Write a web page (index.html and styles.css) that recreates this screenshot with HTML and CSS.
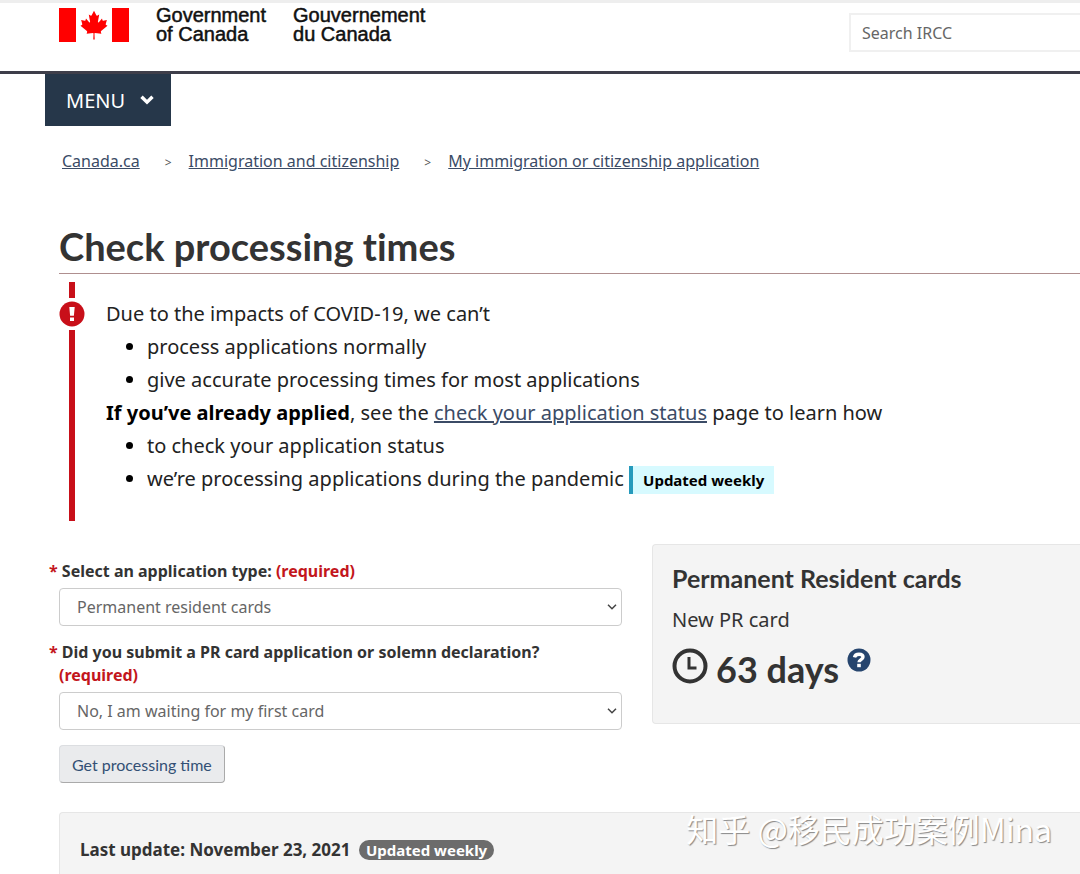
FILE: index.html
```html
<!DOCTYPE html>
<html lang="en">
<head>
  <meta charset="UTF-8" />
  <meta name="viewport" content="width=device-width, initial-scale=1.0" />
  <title>Check processing times</title>
  <link rel="stylesheet" href="styles.css">
</head>
<body>
  <header class="topbar">
    <a href="#" class="brand">
      <svg class="flag" viewBox="0 0 70 34" aria-hidden="true">
        <path fill="#f00" d="M0 0h17v34H0zM53 0h17v34H53z"/>
        <path fill="#f00" transform="translate(3.500 0) scale(.9 .93)" d="M35 3l-2.6 4.8c-.3.5-.8.5-1.3.2l-1.9-1 1.4 7.4c.3 1.3-.7 1.3-1.2.7l-3.3-3.7-.5 1.9c-.1.2-.3.5-.8.4l-4.1-.9 1.1 4c.2.9.4 1.2-.3 1.5l-1.5.7 7.1 5.8c.3.2.4.6.3 1l-.6 2 7.1-.8c.3 0 .6.2.6.5L34.200 34h1.600L35.500 27.500c0-.3.3-.5.6-.5l7.100.8-.6-2c-.1-.4 0-.8.3-1l7.100-5.800-1.500-.7c-.7-.3-.5-.6-.3-1.500l1.100-4-4.100.9c-.5.1-.7-.2-.8-.4l-.5-1.900-3.300 3.700c-.5.600-1.500.600-1.200-.7l1.400-7.400-1.900 1c-.5.300-1 .300-1.300-.2z"/>
      </svg>
      <span class="brand-name">Government<br>of Canada</span>
      <span class="brand-name brand-fr" lang="fr">Gouvernement<br>du Canada</span>
    </a>
    <form class="search">
      <input type="search" class="search-input" placeholder="Search IRCC" aria-label="Search IRCC" />
    </form>
  </header>

  <nav class="menu">
    <button type="button" class="menu-button">MENU
      <svg class="menu-arrow" viewBox="0 0 14 10" aria-hidden="true">
        <path fill="none" stroke="#fff" stroke-width="3.4" d="M1.500 1.700L7 7.200l5.500-5.500"/>
      </svg>
    </button>
  </nav>

  <ol class="breadcrumb">
    <li><a href="#">Canada.ca</a></li>
    <li><a href="#">Immigration and citizenship</a></li>
    <li><a href="#">My immigration or citizenship application</a></li>
  </ol>

  <main class="container">
    <h1>Check processing times</h1>

    <!-- COVID-19 alert -->
    <section class="alert">
      <div class="alert-line">
        <svg class="alert-icon" viewBox="0 0 26 26" aria-hidden="true">
          <circle cx="13" cy="13" r="12.500" fill="#c80f19"/>
          <path fill="#fff" d="M10.300 6h5.400l-.8 8.800h-3.800zM11 16.500h4v3.500h-4z"/>
        </svg>
      </div>
      <div class="alert-text">
        <p>Due to the impacts of COVID-19, we can’t</p>
        <ul>
          <li>process applications normally</li>
          <li>give accurate processing times for most applications</li>
        </ul>
        <p><strong>If you’ve already applied</strong>, see the <a href="#">check your application status</a> page to learn how</p>
        <ul>
          <li>to check your application status</li>
          <li>we’re processing applications during the pandemic <span class="label-info">Updated weekly</span></li>
        </ul>
      </div>
    </section>

    <div class="columns">
      <form class="times-form">
        <label for="appType"><span class="required">*</span> Select an application type: <span class="required">(required)</span></label>
        <div class="select-wrap">
          <select id="appType">
            <option>Permanent resident cards</option>
          </select>
          <svg class="select-arrow" viewBox="0 0 10 6" aria-hidden="true"><path fill="none" stroke="#444" stroke-width="1.500" d="M1 .8l4 4 4-4"/></svg>
        </div>

        <label for="firstCard"><span class="required">*</span> Did you submit a PR card application or solemn declaration? <span class="required">(required)</span></label>
        <div class="select-wrap">
          <select id="firstCard">
            <option>No, I am waiting for my first card</option>
          </select>
          <svg class="select-arrow" viewBox="0 0 10 6" aria-hidden="true"><path fill="none" stroke="#444" stroke-width="1.500" d="M1 .8l4 4 4-4"/></svg>
        </div>

        <button type="button" class="submit-button">Get processing time</button>
      </form>

      <!-- Result -->
      <section class="well result">
        <h2>Permanent Resident cards</h2>
        <p>New PR card</p>
        <div class="result-time">
          <svg class="clock" viewBox="0 0 36 36" aria-hidden="true">
            <circle cx="18" cy="18" r="15.500" fill="none" stroke="#333" stroke-width="4"/>
            <path fill="none" stroke="#333" stroke-width="3" d="M17 9v11h7.500"/>
          </svg>
          <span class="days">63 days</span>
          <button type="button" class="help-button" aria-label="Help">
            <svg viewBox="0 0 24 24" aria-hidden="true">
              <circle cx="12" cy="12" r="11.500" fill="#26456e"/>
              <path fill="none" stroke="#fff" stroke-width="3.400" d="M7.500 9.300C8 6.900 9.600 6.200 12 6.200c2.600 0 4 1.100 4 2.900 0 2.600-4 2.400-4 5.200"/>
              <path fill="#fff" d="M10.200 15.800h3.600v3.400h-3.600z"/>
            </svg>
          </button>
        </div>
      </section>
    </div>

    <section class="well update">
      <strong>Last update: November 23, 2021</strong>
      <span class="badge">Updated weekly</span>
    </section>
  </main>

  <div class="watermark" lang="zh">知乎 @移民成功案例Mina</div>
</body>
</html>
```
FILE: styles.css
```css
* {
  box-sizing: border-box;
}

html {
  height: 100%;
  overflow: hidden;
}

body {
  margin: 0;
  height: 100%;
  overflow: hidden;
  font-family: "Noto Sans", sans-serif;
  font-size: 16px;
  line-height: 23px;
  color: #333;
  background: #fff;
  font-variant-ligatures: none;
}

h1,
h2,
p,
ul,
ol {
  margin: 0;
  padding: 0;
}

a {
  color: #3b4b66;
}

/* Header */
.topbar {
  display: flex;
  justify-content: space-between;
  align-items: flex-start;
  height: 74px;
  padding-left: 59px;
  border-top: 3px solid #eee;
  border-bottom: 3px solid #3e3e4a;
}

.brand {
  display: flex;
  align-items: center;
  padding-top: 3px;
  color: #111;
  text-decoration: none;
}

.flag {
  width: 70px;
  height: 34px;
  margin-right: 27px;
}

.brand-name {
  font-family: "Liberation Sans", Arial, sans-serif;
  font-size: 20px;
  line-height: 19px;
  -webkit-text-stroke: 0.5px #111;
}

.brand-fr {
  margin-left: 27px;
}

.search {
  width: 231px;
  padding-top: 10px;
}

.search-input {
  display: block;
  width: 100%;
  height: 39px;
  padding: 0 11px;
  border: 2px solid #f0f0f0;
  border-right: none;
  border-radius: 0;
  outline: none;
  background: #fff;
  font-family: inherit;
  font-size: 16px;
  appearance: none;
}

.search-input::placeholder {
  color: #666;
}

.menu {
  padding-left: 45px;
}

.menu-button {
  display: flex;
  align-items: center;
  gap: 15px;
  height: 52px;
  padding: 0 17px 0 21px;
  border: none;
  background: #26374a;
  color: #fff;
  font-family: inherit;
  font-size: 20px;
}

.menu-arrow {
  width: 14px;
  height: 10px;
}

.breadcrumb {
  display: flex;
  padding: 24px 0 0 62px;
  list-style: none;
}

.breadcrumb li + li::before {
  content: ">";
  margin: 0 17px 0 25px;
  font-size: 12px;
  color: #555;
}

/* Content */
.container {
  padding-left: 59px;
}

h1 {
  padding: 47px 0 2px;
  border-bottom: 1px solid #af8f8f;
  font-family: Lato, sans-serif;
  font-size: 38px;
  line-height: 50px;
}

.alert {
  display: flex;
  gap: 21px;
  margin-top: 8px;
}

.alert-line {
  width: 26px;
  background: linear-gradient(#c80f19, #c80f19) center / 6px 100% no-repeat;
}

.alert-icon {
  display: block;
  width: 26px;
  height: 32px;
  margin-top: 16px;
  background: #fff;
}

.alert-text {
  padding: 15px 0 26px;
  color: #222;
  font-size: 20px;
  line-height: 33px;
}

.alert-text ul {
  padding-left: 41px;
}

.alert-text strong,
.alert-text li::marker {
  color: #000;
}

.label-info {
  display: inline-block;
  padding: 0 10px;
  border-left: 4px solid #269abc;
  background: #d7faff;
  color: #000;
  font-size: 15px;
  font-weight: bold;
  line-height: 28px;
}

.columns {
  display: flex;
  align-items: flex-start;
  gap: 30px;
  margin-top: 23px;
}

.times-form {
  width: 563px;
  padding-top: 16px;
}

.times-form label {
  display: block;
  padding-right: 40px;
  text-indent: -10px;
  font-weight: bold;
}

.required {
  color: #c3161c;
}

.select-wrap {
  position: relative;
  margin: 5px 0 15px;
}

select {
  display: block;
  width: 100%;
  height: 38px;
  padding: 0 17px;
  border: 1px solid #ccc;
  border-radius: 4px;
  background: #fff;
  color: #666;
  font-family: inherit;
  font-size: 16px;
  appearance: none;
}

.select-arrow {
  position: absolute;
  top: 16px;
  right: 5px;
  width: 10px;
  height: 6px;
  pointer-events: none;
}

.submit-button {
  height: 38px;
  padding: 0 12px;
  border: 1px solid #dcdee1;
  border-right-color: #aaa;
  border-bottom-color: #aaa;
  border-radius: 4px;
  background: #eaebed;
  color: #335075;
  font-family: Lato, sans-serif;
  font-size: 16px;
}

.well {
  border: 1px solid #e6e6e6;
  border-right: none;
  border-radius: 4px 0 0 4px;
  background: #f4f4f4;
}

.result {
  flex: 1;
  height: 180px;
  padding: 19px;
}

.result h2 {
  font-family: Lato, sans-serif;
  font-size: 25px;
  line-height: 28px;
}

.result p {
  margin-top: 12px;
  font-size: 20px;
  line-height: 32px;
}

.result-time {
  display: flex;
  align-items: flex-start;
  margin-top: 12px;
}

.clock {
  width: 36px;
  height: 36px;
}

.days {
  margin: 0 8px;
  font-family: Lato, sans-serif;
  font-size: 36px;
  font-weight: bold;
  line-height: 42px;
}

.help-button {
  width: 24px;
  height: 24px;
  padding: 0;
  border: none;
  background: none;
}

.help-button svg {
  display: block;
}

.update {
  margin-top: 29px;
  padding: 25px 20px;
  font-size: 17px;
}

.badge {
  display: inline-block;
  margin-left: 4px;
  padding: 0 7px;
  border-radius: 10px;
  background: #6c6c6c;
  color: #fff;
  font-size: 15px;
  font-weight: bold;
  line-height: 20px;
}

.watermark {
  position: absolute;
  right: 28px;
  bottom: 26px;
  color: #fff;
  font-family: "Noto Sans CJK SC", sans-serif;
  font-size: 32px;
  line-height: 40px;
  text-shadow: 1px 1px 1px #888;
}
```
